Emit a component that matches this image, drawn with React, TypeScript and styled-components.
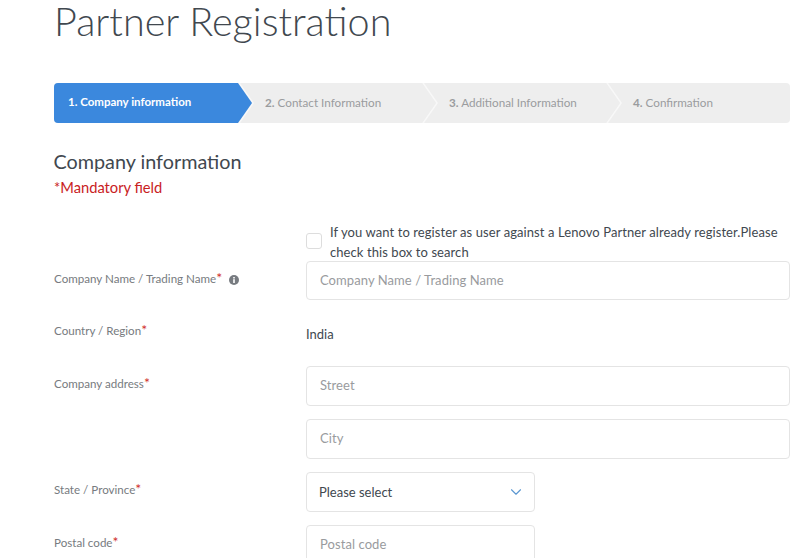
import React from "react";
import styled, { createGlobalStyle } from "styled-components";
import { ChevronDown } from "lucide-react";

const GlobalStyle = createGlobalStyle`
  html, body {
    margin: 0;
    height: 558px;
    overflow: hidden;
    background: #fff;
    font-family: Lato, "Liberation Sans", sans-serif;
    color: #41484f;
  }
`;

const Page = styled.div`
  width: 736px;
  padding-left: 54px;
`;

const Title = styled.h1`
  margin: 0;
  height: 83px;
  font-size: 39.6px;
  line-height: 41px;
  font-weight: 300;
  color: #41484f;
`;

const Stepper = styled.ol`
  display: flex;
  height: 40px;
  margin: 0;
  padding: 0;
  list-style: none;
  background: #eeeeee;
  border-radius: 4px;
`;

const Step = styled.li<{ $active?: boolean; $first?: boolean }>`
  position: relative;
  width: 184px;
  box-sizing: border-box;
  padding-left: ${(p) => (p.$first ? "14px" : "27px")};
  font-size: ${(p) => (p.$active ? "11.5px" : "11.7px")};
  line-height: 38px;
  white-space: nowrap;
  color: ${(p) => (p.$active ? "#fff" : "#9a9c9e")};
  font-weight: ${(p) => (p.$active ? 700 : 400)};
  background: ${(p) => (p.$active ? "#3b88dd" : "transparent")};
  border-radius: ${(p) => (p.$first ? "4px 0 0 4px" : "0")};

  b {
    font-weight: 700;
  }

  &:not(:last-child)::after {
    content: "";
    position: absolute;
    z-index: 1;
    top: 0;
    right: -14px;
    width: 14px;
    height: 40px;
    background: ${(p) => (p.$active ? "#3b88dd" : "#eeeeee")};
    clip-path: polygon(0 0, 100% 50%, 0 100%);
  }

  &:not(:last-child)::before {
    content: "";
    position: absolute;
    top: 0;
    right: -16px;
    width: 16px;
    height: 40px;
    background: #f8f8f8;
    clip-path: polygon(0 0, 2px 0, 100% 50%, 2px 100%, 0 100%, 14px 50%);
  }
`;

const SectionTitle = styled.h2`
  margin: 26px 0 0 -0.5px;
  font-size: 19.8px;
  line-height: 24px;
  font-weight: 400;
  color: #41484f;
`;

const Mandatory = styled.p`
  margin: 4px 0 0;
  font-size: 14.7px;
  line-height: 20px;
  color: #c9211e;
`;

const Form = styled.form`
  display: grid;
  grid-template-columns: 252px 1fr;
  row-gap: 13px;
  margin-top: 26px;
`;

const CheckRow = styled.label`
  grid-column: 2;
  display: flex;
  align-items: center;
  gap: 8px;
  margin-bottom: -13px;
  height: 38px;
  font-size: 13px;
  line-height: 20px;
  letter-spacing: 0.08px;
  color: #41484f;
`;

const Check = styled.span`
  flex: none;
  width: 16px;
  height: 16px;
  margin-top: -2px;
  border: 1px solid #dddddd;
  border-radius: 3px;
  box-sizing: border-box;
`;

const Label = styled.div`
  padding-top: 11px;
  font-size: 11.6px;
  line-height: 14px;
  color: #777b80;
  display: flex;
  align-items: flex-start;

  i {
    font-style: normal;
    font-size: 14px;
    line-height: 12px;
    color: #d0312d;
  }
`;

const InfoIcon = styled.svg`
  width: 10px;
  height: 10px;
  margin: 3px 0 0 7px;
`;

const FieldStack = styled.div`
  display: flex;
  flex-direction: column;
  gap: 13px;
`;

const Input = styled.input<{ $short?: boolean; $compact?: boolean }>`
  display: block;
  box-sizing: border-box;
  width: ${(p) => (p.$short ? "229px" : "100%")};
  height: ${(p) => (p.$compact ? "39px" : "40px")};
  padding: 0 13px 2px;
  border: 1px solid #e4e4e4;
  border-radius: 4px;
  font-family: inherit;
  font-size: 13px;
  letter-spacing: 0.07px;
  background: #fff;

  &::placeholder {
    color: #999b9e;
    opacity: 1;
  }
`;

const Select = styled.div`
  display: flex;
  align-items: center;
  justify-content: space-between;
  box-sizing: border-box;
  width: 229px;
  height: 40px;
  padding: 0 9px 0 12px;
  border: 1px solid #e4e4e4;
  border-radius: 4px;
  font-size: 13px;
  color: #41484f;

  svg {
    color: #5b97d1;
  }
`;

const StaticValue = styled.div`
  height: 40px;
  line-height: 42px;
  font-size: 13px;
  color: #41484f;
`;

const steps = ["Company information", "Contact Information", "Additional Information", "Confirmation"];

export default function App() {
  return (
    <Page>
      <GlobalStyle />
      <Title>Partner Registration</Title>
      <Stepper>
        {steps.map((s, i) => (
          <Step key={s} $active={i === 0} $first={i === 0}>
            <b>{i + 1}.</b> {s}
          </Step>
        ))}
      </Stepper>
      <SectionTitle>Company information</SectionTitle>
      <Mandatory>*Mandatory field</Mandatory>
      <Form>
        <CheckRow>
          <Check />
          <span>
            If you want to register as user against a Lenovo Partner already register.Please check this box to search
          </span>
        </CheckRow>

        <Label>
          Company Name / Trading Name<i>*</i>
          <InfoIcon viewBox="0 0 10 10">
            <circle cx="5" cy="5" r="5" fill="#777b80" />
            <rect x="4.2" y="4.2" width="1.6" height="3.8" fill="#fff" />
            <rect x="4.2" y="2" width="1.6" height="1.5" fill="#fff" />
          </InfoIcon>
        </Label>
        <Input $compact placeholder="Company Name / Trading Name" />

        <Label>
          Country / Region<i>*</i>
        </Label>
        <StaticValue>India</StaticValue>

        <Label>
          Company address<i>*</i>
        </Label>
        <FieldStack>
          <Input placeholder="Street" />
          <Input placeholder="City" />
        </FieldStack>

        <Label>
          State / Province<i>*</i>
        </Label>
        <Select>
          Please select
          <ChevronDown size={18} strokeWidth={1.5} />
        </Select>

        <Label>
          Postal code<i>*</i>
        </Label>
        <Input $short placeholder="Postal code" />
      </Form>
    </Page>
  );
}
